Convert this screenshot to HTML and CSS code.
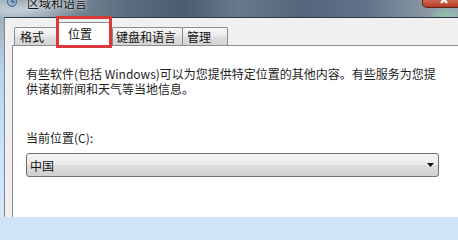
FILE: index.html
```html
<!DOCTYPE html>
<html lang="zh-CN">
<head>
<meta charset="utf-8">
<title>区域和语言</title>
<link rel="stylesheet" href="styles.css">
</head>
<body>
<div class="titlebar">
  <svg class="appicon" width="10" height="9" viewBox="0 0 10 9">
    <circle cx="5" cy="2" r="4.5" fill="#8fb2d4" stroke="#4f6275" stroke-width="1"/>
    <path d="M5 -1 V2 H7.5" stroke="#2c3a48" stroke-width="1" fill="none"/>
  </svg>
  <span class="title">区域和语言</span>
  <div class="close">
    <svg width="40" height="8" viewBox="0 0 40 8">
      <path d="M19 -3 L25 4 M25 -3 L19 4" stroke="#fff" stroke-width="2.2" fill="none"/>
    </svg>
  </div>
</div>
<div class="frame">
  <div class="client">
    <div class="tabctl">
      <div class="tabs">
        <div class="tab t1">格式</div>
        <div class="tab t2 selected">位置</div>
        <div class="tab t3">键盘和语言</div>
        <div class="tab t4">管理</div>
      </div>
      <div class="panel">
        <p class="desc">有些软件(包括 Windows)可以为您提供特定位置的其他内容。有些服务为您提<br>供诸如新闻和天气等当地信息。</p>
        <div class="label">当前位置(C):</div>
        <div class="combo">
          <span class="combo-text">中国</span>
          <svg class="arrow" width="7" height="4" viewBox="0 0 7 4"><path d="M0 0 H7 L3.5 4 Z" fill="#111"/></svg>
        </div>
      </div>
    </div>
  </div>
</div>
<div class="highlight"></div>
</body>
</html>
```

FILE: styles.css
```css
html {
  margin: 0;
  padding: 0;
  height: 217px;
  overflow: hidden;
  background: #cfe4f6;
}
body {
  margin: 0;
  padding: 0;
  width: 458px;
  height: 217px;
  overflow: hidden;
  position: relative;
  font-family: "Noto Sans CJK SC", "Microsoft YaHei", sans-serif;
  font-size: 12px;
  color: #1e1e1e;
  background: #cfe4f6;
}
.titlebar {
  height: 17px;
  display: flex;
  align-items: flex-start;
  background:
    radial-gradient(ellipse 18px 8px at 445px 15px, rgba(140, 220, 170, 0.55), rgba(140, 220, 170, 0) 100%),
    radial-gradient(ellipse 60px 14px at 20px 10px, rgba(220, 232, 240, 0.7), rgba(220, 232, 240, 0) 100%),
    linear-gradient(90deg, #9aa9b5 0, #7d8d9b 12%, #5b6d7e 28%, #4a5c6d 40%, #67798a 52%, #52657a 66%, #60738a 80%, #8795a1 92%, #9aa7b1 100%);
}
.appicon {
  flex-shrink: 0;
  margin-left: 7px;
}
.title {
  margin-left: 10px;
  margin-top: -4px;
  line-height: 14px;
  font-size: 12px;
  color: #111;
  text-shadow: 0 0 5px rgba(255, 255, 255, 0.8), 0 0 2px rgba(255, 255, 255, 0.6);
}
.close {
  flex-shrink: 0;
  margin-left: auto;
  margin-right: -4px;
  width: 40px;
  height: 8px;
  box-sizing: border-box;
  border: 1px solid #5a2418;
  border-top: 0;
  border-radius: 0 0 5px 5px;
  background: linear-gradient(#d06a52, #b53a22);
  overflow: hidden;
}
.close svg {
  display: block;
  margin: -1px 0 0 -1px;
}
.frame {
  height: 200px;
  display: flex;
  padding-left: 4px;
  background: linear-gradient(#9fb0bd, #bcd4e8 30%, #cfe4f6 70%, #d4e8f8);
}
.client {
  flex: 1;
  min-width: 0;
  border-left: 1px solid #7c8893;
  border-top: 1px solid #2c3a46;
  background: #f0f0f0;
  overflow: hidden;
}
.tabctl {
  margin-left: 7px;
}
.tabs {
  height: 27px;
  display: flex;
  align-items: flex-end;
  padding-left: 2px;
}
.tab {
  flex-shrink: 0;
  box-sizing: border-box;
  height: 18px;
  line-height: 17px;
  border: 1px solid #898c95;
  border-bottom: 0;
  border-radius: 2px 2px 0 0;
  background: linear-gradient(#f7f7f7, #ececec 45%, #dedede 55%, #d4d4d4);
  color: #111;
  white-space: nowrap;
}
.t1 { width: 43px; padding-left: 5px; }
.t2 { width: 55px; padding-left: 10px; }
.t3 { width: 71px; padding-left: 3px; }
.t4 { width: 46px; padding-left: 4px; margin-left: -1px; }
.tab.selected {
  height: 24px;
  line-height: 22px;
  margin-bottom: -1px;
  background: #fff;
  position: relative;
  z-index: 1;
}
.panel {
  width: 470px;
  height: 200px;
  border: 1px solid #898c95;
  background: #fff;
  padding: 20px 0 0 13px;
  box-sizing: border-box;
}
.desc {
  margin: 0;
  line-height: 15px;
  white-space: nowrap;
}
.label {
  margin-top: 34px;
  line-height: 15px;
}
.combo {
  margin-top: 8px;
  width: 413px;
  height: 24px;
  box-sizing: border-box;
  border: 1px solid #707070;
  border-radius: 3px;
  background: linear-gradient(#f3f3f3, #ebebeb 48%, #dddddd 52%, #cfcfcf);
  display: flex;
  align-items: center;
  justify-content: space-between;
  padding: 0 4px 0 3px;
  color: #111;
}
.arrow {
  display: block;
}
.highlight {
  position: absolute;
  left: 56px;
  top: 16px;
  width: 56px;
  height: 32px;
  box-sizing: border-box;
  border: 3px solid #d83a3a;
  z-index: 5;
}
```
